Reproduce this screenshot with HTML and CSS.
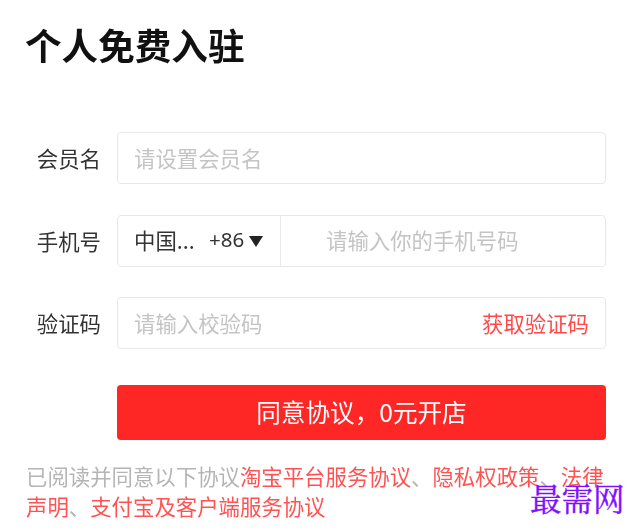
FILE: index.html
```html
<!DOCTYPE html>
<html lang="zh-CN">
<head>
<meta charset="utf-8">
<title>个人免费入驻</title>
<link rel="stylesheet" href="styles.css">
</head>
<body>
<main class="page">
  <h1 class="title">个人免费入驻</h1>
  <form class="form">
    <div class="row">
      <label class="label">会员名</label>
      <div class="field"><span class="placeholder">请设置会员名</span></div>
    </div>
    <div class="row">
      <label class="label">手机号</label>
      <div class="field field-phone">
        <div class="country">
          <span class="country-name">中国...</span>
          <span class="code">+86</span>
          <svg class="caret" viewBox="0 0 14 11" width="14" height="11"><path d="M0 0H14L7 11Z" fill="#222"/></svg>
        </div>
        <span class="placeholder phone-input">请输入你的手机号码</span>
      </div>
    </div>
    <div class="row">
      <label class="label">验证码</label>
      <div class="field field-code">
        <span class="placeholder">请输入校验码</span>
        <a class="get-code">获取验证码</a>
      </div>
    </div>
    <div class="row row-submit">
      <button class="submit" type="button">同意协议，0元开店</button>
    </div>
  </form>
  <p class="terms">已阅读并同意以下协议<a>淘宝平台服务协议</a>、<a>隐私权政策</a>、<a>法律声明</a>、<a>支付宝及客户端服务协议</a></p>
</main>
<div class="watermark">最需网</div>
</body>
</html>
```
FILE: styles.css
```css
* { box-sizing: border-box; }
html, body { margin: 0; padding: 0; background: #fff; }
body {
  width: 642px;
  height: 531px;
  overflow: hidden;
  position: relative;
  font-family: "Noto Sans CJK SC", "Liberation Sans", sans-serif;
}
.page {
  padding: 19px 36px 0 26px;
  filter: blur(0.45px);
}
.title {
  margin: 0 0 0 -1px;
  font-size: 36.6px;
  line-height: 52px;
  font-weight: 700;
  color: #111;
}
.form {
  margin-top: 61px;
  display: flex;
  flex-direction: column;
  gap: 30.5px;
}
.row {
  display: flex;
  align-items: center;
}
.label {
  width: 75px;
  text-align: right;
  font-size: 21.4px;
  line-height: 30px;
  color: #333;
  flex: none;
}
.field {
  margin-left: 16px;
  flex: 1;
  height: 52px;
  border: 1.5px solid #e8e8e8;
  border-radius: 4px;
  display: flex;
  align-items: center;
  padding: 0 16px 2px;
  font-size: 21.4px;
}
.placeholder { color: #c4c4c4; }
.field-phone { padding: 0 0 0; }
.country {
  width: 163px;
  height: 100%;
  flex: none;
  border-right: 1.5px solid #e8e8e8;
  display: flex;
  align-items: center;
  padding: 0 0 3px 16px;
  color: #333;
}
.country-name { width: 75px; flex: none; }
.code { font-family: "Noto Sans", sans-serif; font-size: 20.5px; }
.caret { margin: 4px 0 0 5px; }
.phone-input { margin: 0 0 3px 45px; }
.field-code { justify-content: space-between; }
.get-code { color: #ff4a4a; }
.row-submit { padding-left: 91px; margin-top: 5px; }
.submit {
  width: 100%;
  height: 55px;
  border: 0;
  border-radius: 4px;
  background: #ff2626;
  color: #fff;
  font-family: inherit;
  font-size: 24.6px;
  padding: 0 0 2px;
}
.terms {
  margin: 21px 0 0;
  font-size: 21.4px;
  line-height: 30px;
  color: #b5b5b5;
  width: 580px;
}
.terms a { color: #ff5252; }
.watermark {
  position: absolute;
  left: 530px;
  top: 478px;
  font-family: "Noto Serif CJK SC", "Noto Sans CJK SC", serif;
  font-size: 31.5px;
  line-height: 40px;
  color: #7f10ff;
  -webkit-text-stroke: 0.4px #7f10ff;
  white-space: nowrap;
}
```
